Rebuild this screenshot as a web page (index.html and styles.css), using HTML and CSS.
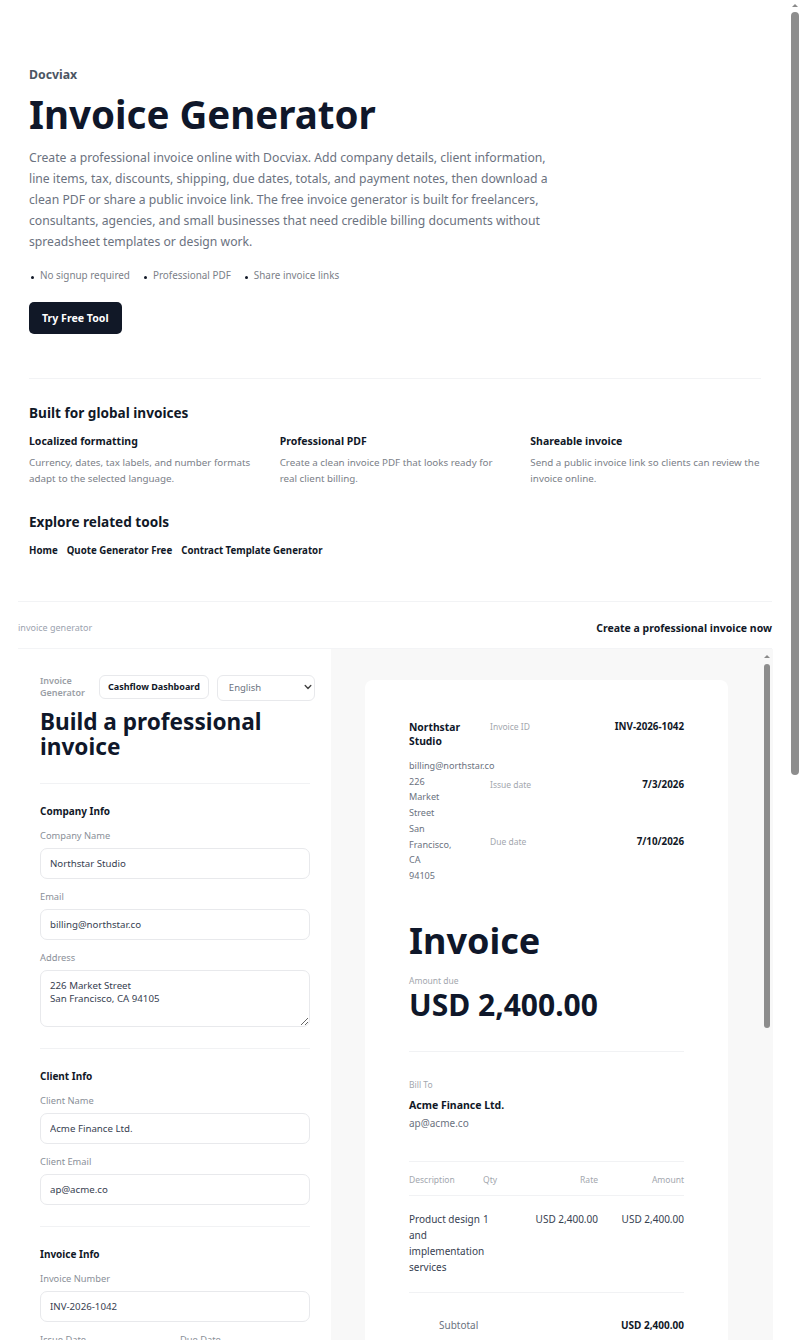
FILE: index.html
```html
<!DOCTYPE html>
<html lang="en">
<head>
    <meta charset="UTF-8">
    <meta name="viewport" content="width=device-width, initial-scale=1.0">
    <title>Invoice Generator - Docviax</title>
    <link rel="stylesheet" href="styles.css">
</head>
<body>
<div class="page">
    <div class="intro">
        <header class="hero">
            <div class="brand">Docviax</div>
            <h1>Invoice Generator</h1>
            <p class="lead">Create a professional invoice online with Docviax. Add company details, client information, line items, tax, discounts, shipping, due dates, totals, and payment notes, then download a clean PDF or share a public invoice link. The free invoice generator is built for freelancers, consultants, agencies, and small businesses that need credible billing documents without spreadsheet templates or design work.</p>
            <ul class="perks">
                <li>No signup required</li>
                <li>Professional PDF</li>
                <li>Share invoice links</li>
            </ul>
            <a class="cta" href="#tool">Try Free Tool</a>
        </header>

        <section class="info">
            <h2>Built for global invoices</h2>
            <div class="features">
                <div class="feature">
                    <h3>Localized formatting</h3>
                    <p>Currency, dates, tax labels, and number formats adapt to the selected language.</p>
                </div>
                <div class="feature">
                    <h3>Professional PDF</h3>
                    <p>Create a clean invoice PDF that looks ready for real client billing.</p>
                </div>
                <div class="feature">
                    <h3>Shareable invoice</h3>
                    <p>Send a public invoice link so clients can review the invoice online.</p>
                </div>
            </div>
            <h2 class="spaced">Explore related tools</h2>
            <nav class="related">
                <a href="#">Home</a>
                <a href="#">Quote Generator Free</a>
                <a href="#">Contract Template Generator</a>
            </nav>
        </section>
    </div>

    <div class="tool-bar">
        <span>invoice generator</span>
        <strong>Create a professional invoice now</strong>
    </div>

    <div class="workspace" id="tool">
        <aside class="editor">
            <div class="editor-head">
                <div class="head-row">
                    <span class="app-label">Invoice Generator</span>
                    <a class="btn-ghost" href="#">Cashflow Dashboard</a>
                    <div class="select-wrap">
                        <select class="lang">
                            <option>English</option>
                            <option>Español</option>
                            <option>Deutsch</option>
                        </select>
                        <svg class="chev" width="8" height="8" viewBox="0 0 8 8"><path d="M1.2 2.6 4 5.4 6.8 2.6" fill="none" stroke="#444" stroke-width="1.4" stroke-linecap="round" stroke-linejoin="round"/></svg>
                    </div>
                </div>
                <h2>Build a professional invoice</h2>
            </div>

            <div class="section">
                <h3>Company Info</h3>
                <div class="field">
                    <label>Company Name</label>
                    <input class="input" type="text" value="Northstar Studio">
                </div>
                <div class="field">
                    <label>Email</label>
                    <input class="input" type="text" value="billing@northstar.co">
                </div>
                <div class="field">
                    <label>Address</label>
                    <textarea class="input area">226 Market Street
San Francisco, CA 94105</textarea>
                </div>
            </div>

            <div class="section">
                <h3>Client Info</h3>
                <div class="field">
                    <label>Client Name</label>
                    <input class="input" type="text" value="Acme Finance Ltd.">
                </div>
                <div class="field">
                    <label>Client Email</label>
                    <input class="input" type="text" value="ap@acme.co">
                </div>
            </div>

            <div class="section">
                <h3>Invoice Info</h3>
                <div class="field">
                    <label>Invoice Number</label>
                    <input class="input" type="text" value="INV-2026-1042">
                </div>
                <div class="row2">
                    <div class="field">
                        <label>Issue Date</label>
                        <input class="input" type="text" value="2026-07-03">
                    </div>
                    <div class="field">
                        <label>Due Date</label>
                        <input class="input" type="text" value="2026-07-10">
                    </div>
                </div>
                <div class="field">
                    <label>Currency</label>
                    <input class="input" type="text" value="USD">
                </div>
            </div>

            <div class="section">
                <h3>Line Items</h3>
                <div class="field">
                    <label>Description</label>
                    <input class="input" type="text" value="Product design and implementation services">
                </div>
                <div class="row2">
                    <div class="field">
                        <label>Qty</label>
                        <input class="input" type="text" value="1">
                    </div>
                    <div class="field">
                        <label>Rate</label>
                        <input class="input" type="text" value="2400">
                    </div>
                </div>
                <a class="btn-ghost add" href="#">+ Add line item</a>
            </div>

            <div class="section">
                <h3>Adjustments</h3>
                <div class="row2">
                    <div class="field">
                        <label>Tax Rate (%)</label>
                        <input class="input" type="text" value="0">
                    </div>
                    <div class="field">
                        <label>Discount</label>
                        <input class="input" type="text" value="0">
                    </div>
                </div>
                <div class="field">
                    <label>Shipping</label>
                    <input class="input" type="text" value="0">
                </div>
            </div>

            <div class="section">
                <h3>Notes</h3>
                <div class="field">
                    <label>Payment Notes</label>
                    <textarea class="input area">Payment due within 7 days. Thank you for your business.</textarea>
                </div>
            </div>

            <div class="section">
                <button class="btn-dark" type="button">Download PDF</button>
                <button class="btn-line" type="button">Share invoice link</button>
            </div>
        </aside>

        <div class="preview-pane">
            <div class="preview">
                <article class="paper">
                    <div class="paper-top">
                        <div class="issuer">
                            <div class="issuer-name">Northstar Studio</div>
                            <div class="issuer-email">billing@northstar.co</div>
                            <div class="issuer-addr">226 Market Street San Francisco, CA 94105</div>
                        </div>
                        <div class="meta">
                            <div class="meta-row"><span>Invoice ID</span><strong>INV-2026-1042</strong></div>
                            <div class="meta-row"><span>Issue date</span><strong>7/3/2026</strong></div>
                            <div class="meta-row"><span>Due date</span><strong>7/10/2026</strong></div>
                        </div>
                    </div>

                    <div class="doc-title">Invoice</div>
                    <div class="muted-label">Amount due</div>
                    <div class="amount">USD 2,400.00</div>

                    <div class="bill">
                        <div class="muted-label">Bill To</div>
                        <div class="bill-name">Acme Finance Ltd.</div>
                        <div class="bill-email">ap@acme.co</div>
                    </div>

                    <table class="items">
                        <colgroup>
                            <col style="width: 74px">
                            <col style="width: 30px">
                            <col style="width: 85px">
                            <col style="width: 86px">
                        </colgroup>
                        <thead>
                            <tr><th>Description</th><th>Qty</th><th class="num">Rate</th><th class="num">Amount</th></tr>
                        </thead>
                        <tbody>
                            <tr><td>Product design and implementation services</td><td>1</td><td class="num">USD 2,400.00</td><td class="num">USD 2,400.00</td></tr>
                        </tbody>
                    </table>

                    <div class="totals">
                        <div class="total-row"><span>Subtotal</span><strong>USD 2,400.00</strong></div>
                        <div class="total-row"><span>Tax</span><strong>USD 0.00</strong></div>
                        <div class="total-row grand"><span>Total</span><strong>USD 2,400.00</strong></div>
                    </div>
                </article>
            </div>
            <div class="rail rail-inner" aria-hidden="true"><span class="rail-arrow"></span><span class="rail-thumb"></span></div>
        </div>
    </div>
</div>
<div class="rail rail-page" aria-hidden="true"><span class="rail-arrow"></span><span class="rail-thumb"></span></div>
</body>
</html>
```

FILE: styles.css
```css
body {
    margin: 0;
    font-family: "Noto Sans", "Segoe UI", Arial, sans-serif;
    color: #111827;
    background: #fff;
}
.page {
    width: 790px;
    box-sizing: border-box;
    padding: 0 18px 24px;
}
.intro {
    margin: 0 11px;
}
.hero {
    padding: 66px 0 44px;
    border-bottom: 1px solid #f2f3f5;
}
.brand {
    font-size: 12.3px;
    line-height: 18px;
    font-weight: 700;
    color: #4b5563;
}
.hero h1 {
    margin: 6px 0 0;
    font-size: 38.5px;
    line-height: 48px;
    font-weight: 700;
    color: #0f172a;
}
.lead {
    margin: 9px 0 0;
    max-width: 528px;
    font-size: 12.2px;
    line-height: 21px;
    color: #6b7280;
}
.perks {
    display: flex;
    gap: 12px;
    margin: 15px 0 0;
    padding: 0;
    list-style: none;
    font-size: 9.9px;
    line-height: 16px;
    color: #7b8088;
}
.perks li {
    display: flex;
    align-items: center;
}
.perks li::before {
    content: "";
    width: 3px;
    height: 3px;
    border-radius: 50%;
    background: #111827;
    margin: 4px 6px 0 2px;
}
.cta {
    display: inline-block;
    margin-top: 19px;
    height: 32px;
    line-height: 32px;
    padding: 0 13px;
    border-radius: 5px;
    background: #111827;
    color: #fff;
    font-size: 10.6px;
    font-weight: 700;
    text-decoration: none;
}
.info {
    padding: 24px 0 43px;
}
.info h2 {
    margin: 0;
    font-size: 13.6px;
    line-height: 20px;
    font-weight: 700;
    color: #111827;
}
.info h2.spaced {
    margin-top: 25px;
}
.features {
    display: grid;
    grid-template-columns: repeat(3, 1fr);
    gap: 20px;
    margin-top: 11px;
}
.feature h3 {
    margin: 0;
    font-size: 10.5px;
    line-height: 15px;
    font-weight: 700;
    color: #111827;
}
.feature p {
    margin: 6px 0 0;
    font-size: 9.8px;
    line-height: 16px;
    color: #7b8088;
}
.related {
    display: flex;
    gap: 9px;
    margin-top: 11px;
    line-height: 15px;
}
.related a {
    font-size: 9.7px;
    font-weight: 700;
    color: #111827;
    text-decoration: none;
}
.tool-bar {
    display: flex;
    justify-content: space-between;
    align-items: center;
    border-top: 1px solid #f2f3f5;
    padding: 16px 0 10px;
    line-height: 20px;
}
.tool-bar span {
    font-size: 9px;
    color: #9ca3af;
}
.tool-bar strong {
    font-size: 10.5px;
    color: #111827;
}
.workspace {
    display: grid;
    grid-template-columns: 313px 1fr;
    border-top: 1px solid #f3f4f6;
}
.editor {
    padding: 25px 21px 24px 22px;
}
.editor-head {
    padding-bottom: 24px;
}
.head-row {
    display: flex;
    align-items: center;
    gap: 8px;
}
.head-row > * {
    flex-shrink: 0;
}
.app-label {
    width: 51px;
    font-size: 9px;
    line-height: 12px;
    font-weight: 600;
    color: #9a9ea5;
}
.btn-ghost {
    display: inline-block;
    height: 24px;
    line-height: 22px;
    box-sizing: border-box;
    padding: 0 8px;
    border: 1px solid #e8e9ec;
    border-radius: 6px;
    background: #fff;
    color: #111827;
    font-size: 9px;
    font-weight: 700;
    text-decoration: none;
    white-space: nowrap;
}
.btn-ghost.add {
    align-self: flex-start;
    height: 28px;
    line-height: 26px;
}
.select-wrap {
    position: relative;
    width: 98px;
}
.lang {
    appearance: none;
    width: 100%;
    height: 26px;
    padding: 0 20px 0 11px;
    border: 1px solid #e8e9ec;
    border-radius: 6px;
    background: #fff;
    font-family: inherit;
    font-size: 9.5px;
    color: #6b7280;
}
.chev {
    position: absolute;
    right: 3px;
    top: 9px;
}
.editor h2 {
    margin: 8px 0 0;
    font-size: 22.6px;
    line-height: 25px;
    font-weight: 700;
    color: #0f172a;
}
.section {
    display: flex;
    flex-direction: column;
    gap: 10px;
    border-top: 1px solid #f1f2f4;
    padding: 20px 0 21px;
}
.section h3 {
    margin: 0;
    font-size: 10px;
    line-height: 14px;
    font-weight: 700;
    color: #111827;
}
.field {
    display: flex;
    flex-direction: column;
    min-width: 0;
}
.field label {
    margin-bottom: 5px;
    font-size: 9.3px;
    line-height: 15px;
    color: #8a8f98;
}
.input {
    width: 100%;
    min-width: 0;
    height: 31px;
    box-sizing: border-box;
    padding: 0 9px;
    border: 1px solid #e8e9ec;
    border-radius: 7px;
    background: #fff;
    font-family: inherit;
    font-size: 9.7px;
    color: #374151;
}
.input.area {
    height: 57px;
    padding: 8px 9px;
    line-height: 13.5px;
    resize: vertical;
}
.row2 {
    display: grid;
    grid-template-columns: repeat(2, minmax(0, 1fr));
    gap: 10px;
}
.btn-dark, .btn-line {
    height: 34px;
    border-radius: 6px;
    font-family: inherit;
    font-size: 10px;
    font-weight: 700;
    cursor: pointer;
}
.btn-dark {
    background: #111827;
    color: #fff;
    border: none;
}
.btn-line {
    background: #fff;
    color: #111827;
    border: 1px solid #e8e9ec;
}

/* preview column */
.preview-pane {
    position: sticky;
    top: 0;
    align-self: start;
    height: 100vh;
}
.preview {
    height: 100%;
    box-sizing: border-box;
    overflow-y: auto;
    background: #f8f8f8;
    padding: 31px 45px 32px 34px;
}
.paper {
    min-height: 1200px;
    box-sizing: border-box;
    padding: 40px 44px;
    border-radius: 8px;
    background: #fff;
}
.paper-top {
    display: grid;
    grid-template-columns: 76px 1fr;
    column-gap: 5px;
}
.issuer-name {
    font-size: 10.3px;
    line-height: 14px;
    font-weight: 700;
    color: #0f172a;
}
.issuer-email, .issuer-addr {
    font-size: 9.1px;
    line-height: 15.7px;
    color: #6b7280;
}
.issuer-email {
    margin-top: 10px;
    white-space: nowrap;
}
.issuer-addr {
    width: 0;
}
.meta {
    display: flex;
    flex-direction: column;
    gap: 43.5px;
}
.meta-row {
    display: flex;
    justify-content: space-between;
    line-height: 14px;
}
.meta-row span {
    font-size: 8.5px;
    color: #a3a7ae;
}
.meta-row strong {
    font-size: 9.8px;
    color: #111827;
}
.doc-title {
    margin-top: 35px;
    font-size: 36px;
    line-height: 44px;
    font-weight: 700;
    color: #0f172a;
}
.muted-label {
    margin-top: 12px;
    font-size: 8.5px;
    line-height: 12px;
    color: #a3a7ae;
}
.amount {
    font-size: 30px;
    line-height: 36px;
    font-weight: 700;
    color: #0f172a;
}
.bill {
    margin-top: 28px;
    padding-top: 27px;
    border-top: 1px solid #f1f2f4;
}
.bill .muted-label {
    margin-top: 0;
}
.bill-name {
    margin-top: 6px;
    font-size: 10.5px;
    line-height: 16px;
    font-weight: 700;
    color: #111827;
}
.bill-email {
    margin-top: 3px;
    font-size: 10px;
    line-height: 15px;
    color: #6b7280;
}
.items {
    width: 100%;
    margin-top: 30px;
    border-collapse: collapse;
    table-layout: fixed;
    border-top: 1px solid #f1f2f4;
}
.items th {
    padding: 12px 0 9px;
    border-bottom: 1px solid #f1f2f4;
    font-size: 8.5px;
    line-height: 12px;
    font-weight: 400;
    color: #a3a7ae;
    text-align: left;
}
.items td {
    padding: 15px 0 17px;
    border-bottom: 1px solid #f1f2f4;
    font-size: 10px;
    line-height: 16px;
    color: #374151;
    vertical-align: top;
}
.items .num {
    text-align: right;
}
.totals {
    width: 245px;
    margin: 24px 0 0 auto;
}
.total-row {
    display: flex;
    justify-content: space-between;
    line-height: 16px;
    margin-bottom: 10px;
}
.total-row span {
    font-size: 10px;
    color: #6b7280;
}
.total-row strong {
    font-size: 10px;
    color: #111827;
}
.total-row.grand strong {
    font-size: 13px;
}

/* scroll rails */
.rail {
    position: absolute;
    top: 0;
    right: 0;
    width: 12px;
    height: 100%;
    background: #f8f8f8;
}
.rail-page {
    position: fixed;
    width: 10px;
    height: 100vh;
    background: #fff;
}
.rail-arrow {
    position: absolute;
    top: 6px;
    left: 3px;
    border-left: 3px solid transparent;
    border-right: 3px solid transparent;
    border-bottom: 3px solid #8a8a8a;
}
.rail-page .rail-arrow {
    top: 4px;
    left: 2px;
}
.rail-thumb {
    position: absolute;
    top: 15px;
    left: 3px;
    width: 6px;
    height: 364px;
    border-radius: 3px;
    background: #8d8d8d;
}
.rail-page .rail-thumb {
    top: 12px;
    left: 1px;
    width: 8px;
    height: 763px;
    border-radius: 4px;
}
```
